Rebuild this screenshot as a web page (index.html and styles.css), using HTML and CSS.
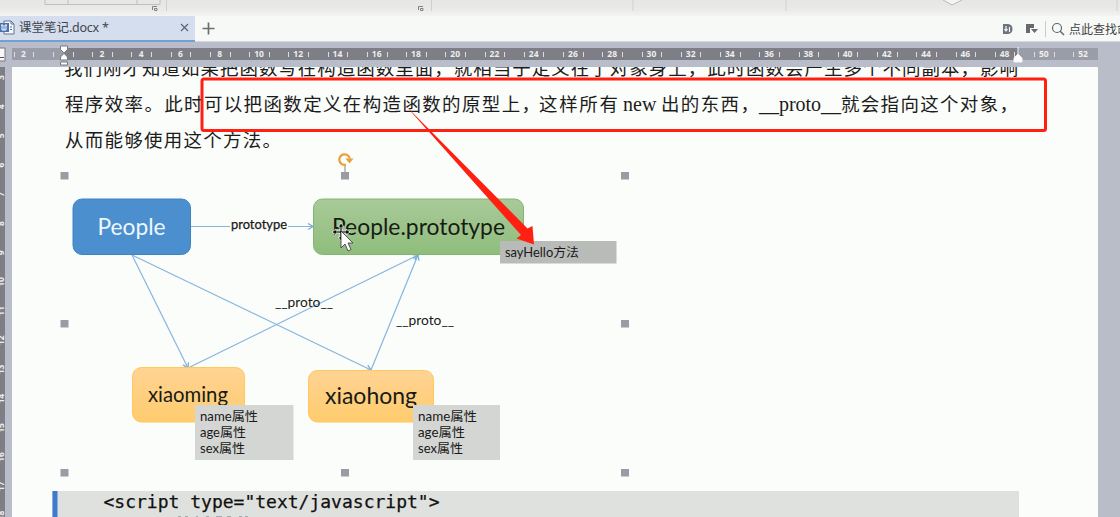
FILE: index.html
```html
<!DOCTYPE html>
<html lang="zh">
<head>
<meta charset="utf-8">
<title>课堂笔记.docx</title>
<link rel="stylesheet" href="styles.css">
</head>
<body>
<div class="app">
  <div class="ribbon">
    <svg width="1120" height="16" viewBox="0 0 1120 16" fill="none">
      <path class="ribbon-line" d="M45 0V4.500H160V0M68 0V4M137 0V4"/>
      <path class="ribbon-sep" d="M166.500 0V11M431.500 0V11M633 0V11M786 0V11M1117 0V11"/>
      <path class="launcher" d="M152.500 10V6.500H157M154.500 8.500H157V10.500H154.500ZM418.500 10V6.500H423M420.500 8.500H423V10.500H420.500Z"/>
      <path d="M943 0L952 5L962 0" fill="#f5f5f5" stroke="#b9b9bc"/>
    </svg>
  </div>
  <div class="tabs">
    <div class="tab">
      <svg class="doc-icon" width="16" height="16" viewBox="0 0 16 16" fill="none">
        <path d="M4 1H11L14 4V14H4Z" fill="#f5f8fc" stroke="#65728c"/>
        <path d="M11 1V4H14M10 7H12M10 9.500H12" stroke="#65728c"/>
        <path d="M0 3H9V12H0Z" fill="#4773b3"/>
        <path d="M1 5H3M2 5V10H4V5M4 10H6V5M5 5H7" stroke="#fff"/>
      </svg>
      <span class="tab-name">课堂笔记<span class="ext">.docx *</span></span>
      <svg width="9" height="9" viewBox="0 0 9 9"><path d="M1 1L8 8M8 1L1 8" stroke="#5c6470" stroke-width="1.200"/></svg>
    </div>
    <svg class="plus" width="13" height="13" viewBox="0 0 13 13"><path d="M6.500 .5V12.500M.5 6.500H12.500" stroke="#6c6e72" stroke-width="1.700"/></svg>
    <div class="tools">
      <svg width="66" height="18" viewBox="0 0 66 18" fill="none">
        <path d="M0 4H5Q9.500 4.500 9.500 9T5 14H0Z" fill="#6c7381"/>
        <path d="M3 6V11M1.500 9L3 11L4.500 9M6.500 7V12" stroke="#f4f6f8" stroke-width="1.200"/>
        <path d="M23 4H31V8H27V13H23ZM28 9H35L31.500 13Z" fill="#666a70"/>
        <path d="M42.500 1V17" stroke="#c9cace"/>
        <circle cx="54" cy="8" r="4.500" stroke="#62656b" stroke-width="1.200"/>
        <path d="M57 11L61 15" stroke="#62656b" stroke-width="1.500"/>
      </svg>
      <span class="search">点此查找命</span>
    </div>
  </div>
  <div class="ruler">
    <svg width="1120" height="25" viewBox="0 0 1120 25">
      <path d="M0 6H5V19H0" fill="#f8f8f8" stroke="#77777f"/><path d="M0 15.500H4" stroke="#555"/>
      <rect x="12" y="6" width="52" height="12" fill="#9a9da8"/>
      <rect x="64" y="6" width="954" height="12" fill="#7d7e86"/>
      <rect x="1018" y="6" width="80" height="12" fill="#9a9da8"/>
      <g id="ticks"></g>
      <path d="M60.500 4H67.500V7.500L64 11L60.500 7.500ZM60.500 18V15L64 11.500L67.500 15V18ZM60.500 20H67.500V23H60.500Z" fill="#fff" stroke="#777982"/>
      <path d="M1018 5V12L1014 16V20H1022V16L1018 12" fill="#fff" stroke="#f4f4f4"/>
    </svg>
  </div>
  <div class="workspace">
    <div class="side-ruler"><svg width="12" height="450" viewBox="0 67 12 450"><g id="side-ticks"></g></svg></div>
    <div class="page">
      <svg class="sheet" width="1086" height="450" viewBox="12 67 1086 450">
        <defs>
          <linearGradient id="green" x2="0" y2="1"><stop stop-color="#a9ca98"/><stop offset="1" stop-color="#8fbd7c"/></linearGradient>
          <linearGradient id="amber" x2="0" y2="1"><stop stop-color="#ffd394"/><stop offset="1" stop-color="#ffcc6d"/></linearGradient>
          <marker id="tip" viewBox="0 0 7 8" refX="6" refY="4" markerWidth="7" markerHeight="8" markerUnits="userSpaceOnUse" orient="auto"><path d="M1 1L6 4L1 7" fill="none" stroke="#7badd9" stroke-width="1.300"/></marker>
        </defs>
        <g class="prose">
          <text x="64" y="75" textLength="954">我们刚才知道如果把函数写在构造函数里面，就相当于定义在了对象身上，此时函数会产生多个不同副本，影响</text>
          <text x="65" y="111" textLength="475">程序效率。此时可以把函数定义在构造函数的原型上，</text>
          <text x="539" y="111" textLength="79">这样所有</text>
          <text class="latin" x="623" y="111">new</text>
          <text x="661" y="111" textLength="98">出的东西，</text>
          <text class="latin" x="759" y="111" textLength="82">__proto__</text>
          <text x="841" y="111" textLength="177">就会指向这个对象，</text>
          <text x="65" y="147" textLength="216">从而能够使用这个方法。</text>
        </g>
        <g class="links">
          <path d="M191 226.500H313" marker-end="url(#tip)"/>
          <path d="M132 255L188 368" marker-end="url(#tip)"/>
          <path d="M132 255L371 370" marker-end="url(#tip)"/>
          <path d="M188 368L418 255" marker-end="url(#tip)"/>
          <path d="M371 370L418 255" marker-end="url(#tip)"/>
        </g>
        <rect x="73" y="199" width="117.500" height="55.500" rx="9" fill="#4b8fce" stroke="#3e82c2"/>
        <rect x="313.500" y="199" width="210" height="55.500" rx="9" fill="url(#green)" stroke="#83b66e"/>
        <rect x="132.500" y="367.500" width="112" height="54.500" rx="9" fill="url(#amber)" stroke="#ffc857"/>
        <rect x="308.500" y="370.500" width="125" height="51.500" rx="9" fill="url(#amber)" stroke="#ffc857"/>
        <g class="node">
          <text class="light" x="97.500" y="235" textLength="68" lengthAdjust="spacingAndGlyphs">People</text>
          <text x="332" y="235" textLength="173" lengthAdjust="spacingAndGlyphs">People.prototype</text>
          <text class="small" x="148" y="402" textLength="80" lengthAdjust="spacingAndGlyphs">xiaoming</text>
          <text x="325" y="404" textLength="92" lengthAdjust="spacingAndGlyphs">xiaohong</text>
        </g>
        <rect x="500" y="241" width="116.500" height="22.500" fill="#b9bbb9"/>
        <rect x="195" y="405" width="98.500" height="55" fill="#d4d6d3"/>
        <rect x="413" y="405" width="87" height="55" fill="#d4d6d3"/>
        <rect x="230" y="220" width="58" height="12" fill="#fbfdfa"/>
        <g class="label">
          <text x="231" y="229" textLength="56" lengthAdjust="spacingAndGlyphs" class="strong">prototype</text>
          <text x="275" y="307" textLength="58" lengthAdjust="spacingAndGlyphs">__proto__</text>
          <text x="396" y="325" textLength="58" lengthAdjust="spacingAndGlyphs">__proto__</text>
          <text x="505" y="257" textLength="74" lengthAdjust="spacingAndGlyphs">sayHello方法</text>
          <text x="200" y="421" textLength="58" lengthAdjust="spacingAndGlyphs">name属性</text>
          <text x="200" y="437" textLength="46" lengthAdjust="spacingAndGlyphs">age属性</text>
          <text x="200" y="453" textLength="45" lengthAdjust="spacingAndGlyphs">sex属性</text>
          <text x="418" y="421" textLength="59" lengthAdjust="spacingAndGlyphs">name属性</text>
          <text x="418" y="437" textLength="47" lengthAdjust="spacingAndGlyphs">age属性</text>
          <text x="418" y="453" textLength="45" lengthAdjust="spacingAndGlyphs">sex属性</text>
        </g>
        <path class="handles" d="M60.500 172h8v7.500h-8zM341 172h8v7.500h-8zM621 172h8v7.500h-8zM60.500 320h8v7.500h-8zM621 320h8v7.500h-8zM60.500 469h8v7.500h-8zM341 469h8v7.500h-8zM621 469h8v7.500h-8z"/>
        <path d="M345 172V165" stroke="#85858c"/>
        <path d="M346 164.700A5.300 5.300 0 1 1 349.800 158.500" fill="none" stroke="#e9a13b" stroke-width="2.200"/>
        <path d="M345.500 158.500H353.500L349.500 163.500Z" fill="#e9a13b"/>
        <rect x="52" y="491" width="967" height="26" fill="#dfe1de"/>
        <rect x="52.500" y="491" width="5" height="26" fill="#3e7bd0"/>
        <text class="code" x="103.500" y="508" textLength="336">&lt;script type="text/javascript"&gt;</text>
        <path d="M178 516.500h3M185 516.500h3M196 516.500h2M206 516.500h3M216 516.500h6M227 516.500h4M239 516.500h3M245 516.500h3" stroke="#a3a9ae"/>
        <g stroke="#f5f5f5" stroke-width=".8" fill="#111">
          <path d="M341 223L344 227H342V231H346V229L350 232L346 235V233H342V237H344L341 241L338 237H340V233H336V235L332 232L336 229V231H340V227H338Z"/>
          <path d="M341 231V248L345 244L348 251L351 249.500L348 243H353Z" fill="#fff" stroke="#333"/>
        </g>
        <rect x="202" y="79" width="843.500" height="51.500" rx="2" fill="none" stroke="#ff2011" stroke-width="3"/>
        <path d="M405 105L527.500 228.500L532.500 226L534 244.500L516.500 238.500L521 235Z" fill="#ff2011"/>
      </svg>
    </div>
  </div>
</div>
<script src="ruler.js"></script>
</body>
</html>
```
FILE: styles.css
```css
* { box-sizing: border-box; }
body { margin: 0; overflow: hidden; font-family: "Noto Sans", "Noto Sans CJK SC", sans-serif; }
svg { display: block; flex: none; }
.app { width: 1120px; height: 517px; display: flex; flex-direction: column; overflow: hidden; background: #f7f9f7; }
.ribbon { height: 16px; background: linear-gradient(#e6e7e5, #eaebe9 60%, #f4f5f3); }
.ribbon-line { stroke: #bdbfc1; }
.ribbon-sep { stroke: #cfd1d1; }
.launcher { stroke: #7d828b; }
.tabs { height: 26px; display: flex; align-items: center; border-bottom: 1px solid #d6d8dd; background: #f7f9f6; }
.tab { width: 195px; height: 26px; display: flex; align-items: center; padding-right: 6px; background: #d5deef; border-bottom: 2px solid #749fd3; }
.doc-icon { margin-right: 3px; }
.tab-name { flex: 1; font-size: 12.5px; line-height: 20px; color: #41454d; white-space: nowrap; }
.ext { letter-spacing: -0.25px; }
.plus { margin-left: 7px; }
.tools { margin-left: auto; width: 117px; display: flex; align-items: center; overflow: hidden; }
.search { font-size: 12px; color: #3f4146; white-space: nowrap; }
.ruler { height: 25px; background: #b9bdc9; font: bold 8.5px "Noto Sans", sans-serif; }
.workspace { height: 450px; display: flex; background: #b9bdc8; }
.side-ruler { width: 12px; background: linear-gradient(90deg, #7d7e86 5px, #b9bdc9 5px); font: bold 8.5px "Noto Sans", sans-serif; }
.page { width: 1086px; background: #fbfdfa; }
.prose { font: 400 18.5px "Noto Sans CJK SC", sans-serif; fill: #1c1c1c; }
.latin { font: 20px "Liberation Serif", serif; }
.node { font: 22.5px Lato, sans-serif; fill: #171b15; }
.light { fill: #eef7fe; }
.small { font-size: 20.5px; }
.links { fill: none; stroke: #86b5df; stroke-width: 1.2; }
.label { font: 12.5px Lato, "Noto Sans CJK SC", sans-serif; fill: #191919; }
.strong { stroke: #191919; stroke-width: 0.25px; }
.handles { fill: #9b9ba6; }
.code { font: 18px "DejaVu Sans Mono", monospace; fill: #111; stroke: #111; stroke-width: 0.25px; }
```
FILE: ruler.js
```js
const NS = "http://www.w3.org/2000/svg";
function add(parent, tag, attrs, label) {
  const el = document.createElementNS(NS, tag);
  for (const key in attrs) el.setAttribute(key, attrs[key]);
  if (label !== undefined) el.textContent = label;
  parent.appendChild(el);
}
const ticks = document.getElementById("ticks");
for (let n = -2; n <= 52; n += 2) {
  const x = 62.8 + n * 19.62;
  if (n) add(ticks, "text", { x: x, y: 15, fill: "#eee", "text-anchor": "middle" }, Math.abs(n));
  for (const offset of [-9.8, 9.8]) {
    if (n === 52 && offset > 0) continue;
    add(ticks, "rect", { x: Math.round(x + offset), y: 10, width: 1, height: 5, fill: "#ddd" });
  }
}
const side = document.getElementById("side-ticks");
for (let n = 3; n <= 18; n++) {
  const y = 77.5 + (n - 3) * 29.2;
  add(side, "text", { x: 0, y: 0, fill: "#eee", "text-anchor": "middle", transform: `translate(4 ${y}) rotate(-90)` }, n);
}
```
